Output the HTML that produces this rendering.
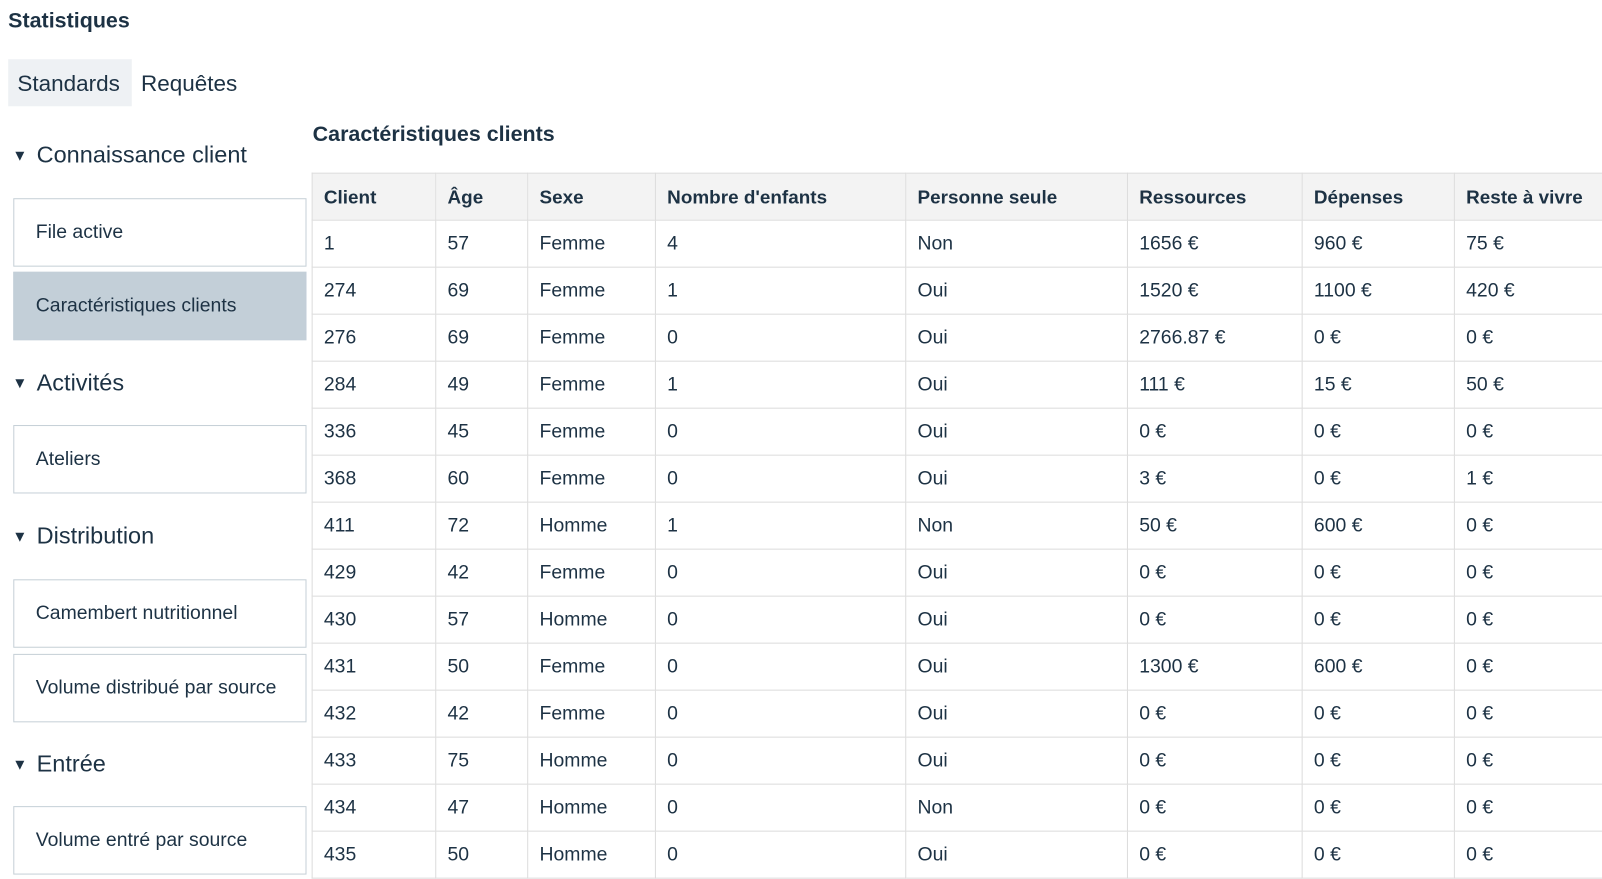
<!DOCTYPE html>
<html><head><meta charset="utf-8"><style>
*{box-sizing:border-box;margin:0;padding:0}
html,body{width:1602px;height:861px;overflow:hidden;background:#fff;font-family:"Liberation Sans",Arial,sans-serif;color:#1d3244}
#w{position:absolute;left:0;top:0;width:1568px;height:843px;transform:scale(1.0217);transform-origin:0 0}
.a{position:absolute;white-space:nowrap}
.item{position:absolute;left:13px;width:287px;height:67px;border:1px solid #c6d0d7;font-size:19px;padding-left:21px;line-height:65px}
.sel{background:#c3cfd8;border-color:#c3cfd8}
.h{position:absolute;left:12px;font-size:23px}
.h span{font-size:15px;margin-right:9px;position:relative;top:-2px}
table{position:absolute;left:305px;top:169px;border-collapse:collapse;font-size:19px;table-layout:fixed;width:1400px}
td,th{border:1px solid #dcdcdc;height:46px;padding:0 0 0 11px;text-align:left;white-space:nowrap;overflow:hidden}
th{background:#f3f3f3;font-weight:bold;font-size:18.5px}
</style></head><body><div id="w">
<div class="a" style="left:8px;top:9px;font-size:21px;font-weight:bold">Statistiques</div>
<div class="a" style="left:8px;top:58px;width:121px;height:46px;background:#eef1f4"></div>
<div class="a" style="left:17px;top:69px;font-size:22px">Standards</div>
<div class="a" style="left:138px;top:69px;font-size:22px">Requêtes</div>
<div class="a" style="left:306px;top:120px;font-size:21px;font-weight:bold">Caractéristiques clients</div>
<div class="h a" style="top:138px"><span>▼</span>Connaissance client</div>
<div class="item" style="top:194px">File active</div>
<div class="item sel" style="top:266px">Caractéristiques clients</div>
<div class="h a" style="top:361px"><span>▼</span>Activités</div>
<div class="item" style="top:416px">Ateliers</div>
<div class="h a" style="top:511px"><span>▼</span>Distribution</div>
<div class="item" style="top:567px">Camembert nutritionnel</div>
<div class="item" style="top:640px">Volume distribué par source</div>
<div class="h a" style="top:734px"><span>▼</span>Entrée</div>
<div class="item" style="top:789px">Volume entré par source</div>
<table>
<colgroup><col style="width:121px"><col style="width:90px"><col style="width:125px"><col style="width:245px"><col style="width:217px"><col style="width:171px"><col style="width:149px"><col style="width:282px"></colgroup>
<tr><th>Client</th><th>Âge</th><th>Sexe</th><th>Nombre d'enfants</th><th>Personne seule</th><th>Ressources</th><th>Dépenses</th><th>Reste à vivre</th></tr>
<tr><td>1</td><td>57</td><td>Femme</td><td>4</td><td>Non</td><td>1656 €</td><td>960 €</td><td>75 €</td></tr>
<tr><td>274</td><td>69</td><td>Femme</td><td>1</td><td>Oui</td><td>1520 €</td><td>1100 €</td><td>420 €</td></tr>
<tr><td>276</td><td>69</td><td>Femme</td><td>0</td><td>Oui</td><td>2766.87 €</td><td>0 €</td><td>0 €</td></tr>
<tr><td>284</td><td>49</td><td>Femme</td><td>1</td><td>Oui</td><td>111 €</td><td>15 €</td><td>50 €</td></tr>
<tr><td>336</td><td>45</td><td>Femme</td><td>0</td><td>Oui</td><td>0 €</td><td>0 €</td><td>0 €</td></tr>
<tr><td>368</td><td>60</td><td>Femme</td><td>0</td><td>Oui</td><td>3 €</td><td>0 €</td><td>1 €</td></tr>
<tr><td>411</td><td>72</td><td>Homme</td><td>1</td><td>Non</td><td>50 €</td><td>600 €</td><td>0 €</td></tr>
<tr><td>429</td><td>42</td><td>Femme</td><td>0</td><td>Oui</td><td>0 €</td><td>0 €</td><td>0 €</td></tr>
<tr><td>430</td><td>57</td><td>Homme</td><td>0</td><td>Oui</td><td>0 €</td><td>0 €</td><td>0 €</td></tr>
<tr><td>431</td><td>50</td><td>Femme</td><td>0</td><td>Oui</td><td>1300 €</td><td>600 €</td><td>0 €</td></tr>
<tr><td>432</td><td>42</td><td>Femme</td><td>0</td><td>Oui</td><td>0 €</td><td>0 €</td><td>0 €</td></tr>
<tr><td>433</td><td>75</td><td>Homme</td><td>0</td><td>Oui</td><td>0 €</td><td>0 €</td><td>0 €</td></tr>
<tr><td>434</td><td>47</td><td>Homme</td><td>0</td><td>Non</td><td>0 €</td><td>0 €</td><td>0 €</td></tr>
<tr><td>435</td><td>50</td><td>Homme</td><td>0</td><td>Oui</td><td>0 €</td><td>0 €</td><td>0 €</td></tr>
</table>
</div></body></html>
